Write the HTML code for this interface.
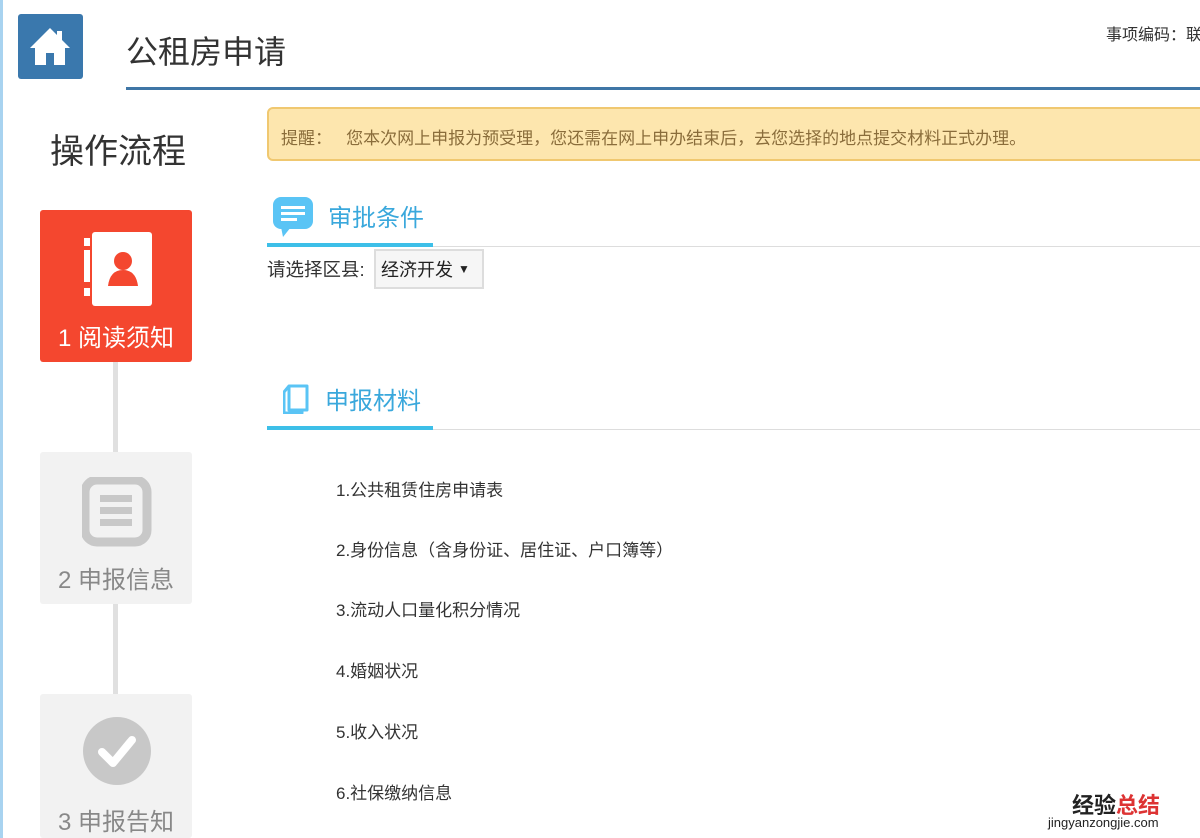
<!DOCTYPE html>
<html><head><meta charset="utf-8"><style>
*{margin:0;padding:0;box-sizing:border-box}
html,body{width:1200px;height:838px;overflow:hidden}
body{background:#fff;position:relative;font-family:"Liberation Sans","Noto Sans CJK SC",sans-serif;color:#333}
.a{position:absolute;white-space:nowrap}
.step{position:absolute;left:40px;width:152px;height:152px;border-radius:3px}
.step .t{position:absolute;left:0;width:152px;text-align:center;top:108px;font-size:24px}
.item{position:absolute;left:336px;font-size:17px;color:#333}
</style></head><body>
<div class="a" style="left:0;top:0;width:3px;height:838px;background:#a8d3f0"></div>
<div class="a" style="left:18px;top:14px;width:65px;height:65px;background:#3a78ad;border-radius:3px">
<svg width="65" height="65" viewBox="0 0 65 65"><path d="M32 14 L12 34 L17 34 L17 51 L28 51 L28 39 L36 39 L36 51 L47 51 L47 34 L52 34 L44 26 L44 17 L39 17 L39 21 Z" fill="#fff"/></svg></div>
<div class="a" style="left:126px;top:27px;font-size:32px;color:#333">公租房申请</div>
<div class="a" style="left:1106px;top:21px;font-size:16px;color:#333">事项编码：联</div>
<div class="a" style="left:126px;top:87px;width:1074px;height:3px;background:#3f76a6"></div>

<div class="a" style="left:50px;top:124px;font-size:34px;color:#333">操作流程</div>
<div class="a" style="left:113px;top:362px;width:5px;height:332px;background:#e0e0e0"></div>
<div class="step" style="top:210px;background:#f4472f;color:#fff">
<svg class="a" style="left:40px;top:20px" width="74" height="78" viewBox="0 0 74 78"><rect x="12" y="2" width="60" height="74" rx="3" fill="#fff"/><rect x="4" y="8" width="6" height="8" fill="#fff"/><rect x="4" y="20" width="6" height="32" fill="#fff"/><rect x="4" y="58" width="6" height="8" fill="#fff"/><circle cx="43" cy="31" r="9" fill="#f4472f"/><path d="M28 56 Q30 40 43 40 Q56 40 58 56 Z" fill="#f4472f"/></svg>
<div class="t" style="color:#fff">1 阅读须知</div></div>
<div class="step" style="top:452px;background:#f2f2f2">
<svg class="a" style="left:42px;top:25px" width="70" height="70"><rect x="3" y="3" width="62" height="62" rx="12" fill="none" stroke="#c8c8c8" stroke-width="9"/><rect x="18" y="18" width="32" height="7" fill="#c8c8c8"/><rect x="18" y="30" width="32" height="7" fill="#c8c8c8"/><rect x="18" y="42" width="32" height="7" fill="#c8c8c8"/></svg>
<div class="t" style="color:#888">2 申报信息</div></div>
<div class="step" style="top:694px;height:144px;background:#f2f2f2">
<svg class="a" style="left:42px;top:22px" width="70" height="70"><circle cx="35" cy="35" r="34" fill="#c8c8c8"/><path d="M20 36 L31 47 L50 24" fill="none" stroke="#fff" stroke-width="8" stroke-linecap="round" stroke-linejoin="round"/></svg>
<div class="t" style="color:#888">3 申报告知</div></div>

<div class="a" style="left:267px;top:107px;width:940px;height:54px;background:#fde6ae;border:2px solid #f0c870;border-radius:6px"></div>
<div class="a" style="left:281px;top:124px;font-size:17px;color:#8a6d3b">提醒：&nbsp;&nbsp;&nbsp;您本次网上申报为预受理，您还需在网上申办结束后，去您选择的地点提交材料正式办理。</div>

<svg class="a" style="left:273px;top:197px" width="40" height="40"><rect x="0" y="0" width="40" height="32" rx="8" fill="#5ac4f5"/><path d="M8 30 L10 40 L18 30 Z" fill="#5ac4f5"/><rect x="8" y="9" width="24" height="3" fill="#fff"/><rect x="8" y="15" width="24" height="3" fill="#fff"/><rect x="8" y="21" width="16" height="3" fill="#fff"/></svg>
<div class="a" style="left:328px;top:198px;font-size:24px;color:#3aa8dc">审批条件</div>
<div class="a" style="left:267px;top:246px;width:933px;height:1px;background:#ddd"></div>
<div class="a" style="left:267px;top:243px;width:166px;height:4px;background:#3dbfe8"></div>
<div class="a" style="left:267px;top:256px;font-size:18.5px;color:#333">请选择区县:</div>
<div class="a" style="left:374px;top:249px;width:110px;height:40px;background:#f6f6f6;border:2px solid #ddd"></div>
<div class="a" style="left:381px;top:256px;font-size:18px;color:#222">经济开发 <span style="font-size:12px;position:relative;top:-3px">▼</span></div>

<svg class="a" style="left:283px;top:384px" width="26" height="30"><path d="M6 2 H24 V26 H6 Z M6 2 L1 8 V29 H19 V26" fill="none" stroke="#5ac4f5" stroke-width="3" stroke-linejoin="round"/></svg>
<div class="a" style="left:325px;top:381px;font-size:24px;color:#3aa8dc">申报材料</div>
<div class="a" style="left:267px;top:429px;width:933px;height:1px;background:#ddd"></div>
<div class="a" style="left:267px;top:426px;width:166px;height:4px;background:#3dbfe8"></div>

<div class="item" style="top:476px">1.公共租赁住房申请表</div>
<div class="item" style="top:536px">2.身份信息（含身份证、居住证、户口簿等）</div>
<div class="item" style="top:596px">3.流动人口量化积分情况</div>
<div class="item" style="top:657px">4.婚姻状况</div>
<div class="item" style="top:718px">5.收入状况</div>
<div class="item" style="top:779px">6.社保缴纳信息</div>

<div class="a" style="left:1072px;top:788px;font-size:22px;font-weight:bold;color:#222">经验<span style="color:#d33">总结</span></div>
<div class="a" style="left:1048px;top:815px;font-size:13px;color:#222">jingyanzongjie.com</div>
</body></html>
